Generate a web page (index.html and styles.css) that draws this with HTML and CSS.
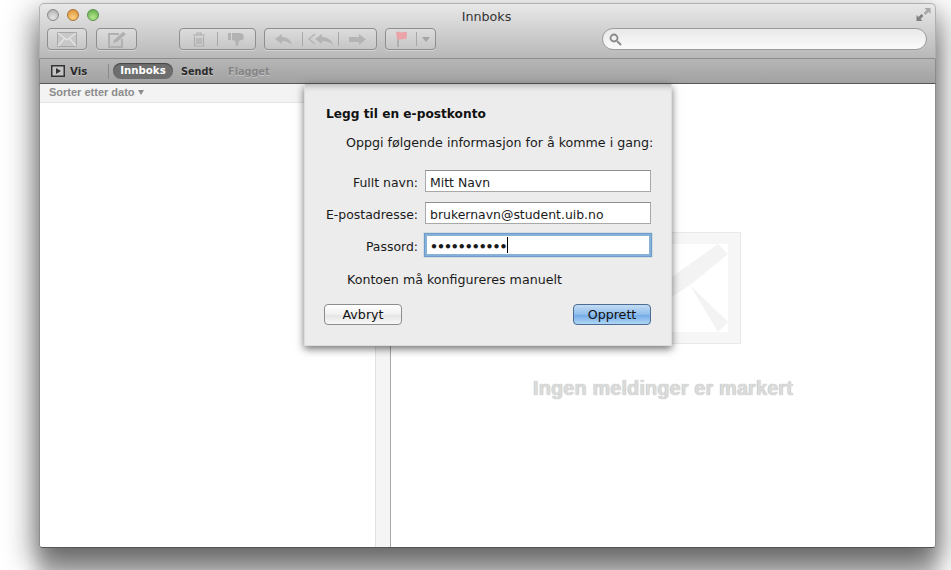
FILE: index.html
```html
<!DOCTYPE html>
<html lang="nb">
<head>
<meta charset="utf-8">
<title>Innboks</title>
<link rel="stylesheet" href="styles.css">
</head>
<body>
<div class="window">
  <header class="titlebar">
    <div class="titlerow">
      <div class="lights"><span class="light gray"></span><span class="light orange"></span><span class="light green"></span></div>
      <div class="title">Innboks</div>
      <svg class="fullscreen" width="15" height="15" viewBox="0 0 15 15"><path d="M8.500 1H14.500V7L12.500 5 9.500 8 7.500 6 10.500 3z" fill="#a9a9a9"/><path d="M6.500 14H.5V8L2.500 10 5.500 7 7.500 9 4.500 12z" fill="#808080"/></svg>
    </div>
    <div class="toolbar">
      <div class="btn w40"><svg width="20" height="15" viewBox="0 0 20 15"><rect x=".5" y=".5" width="19" height="14" fill="#c8c8c8" stroke="#a8a8a8"/><path d="M1 1l9 7 9-7M1 14l6.500-7.500M19 14l-6.500-7.500" fill="none" stroke="#e4e4e4" stroke-width="1.300"/></svg></div>
      <div class="btn w41"><svg width="20" height="17" viewBox="0 0 20 17"><path d="M12 3H2v13h13V8" fill="none" stroke="#b0b0b0" stroke-width="2"/><path d="M6 12l1-3 9-8 3 2-9 8z" fill="#b0b0b0"/></svg></div>
      <div class="btn group g1">
        <span class="seg s1"><svg width="12" height="15" viewBox="0 0 12 15"><path d="M0 3h12M4 3V1h4v2M1.500 4.500V14h9V4.500M4 6v6M6 6v6M8 6v6" fill="none" stroke="#aeaeae" stroke-width="1.200"/></svg></span>
        <span class="seg s2"><svg width="17" height="15" viewBox="0 0 17 15"><path d="M0 1h3v7H0zM4 1h8l3 1 1 5-5 2-1 5H8L7 9 4 8z" fill="#b2b2b2"/></svg></span>
      </div>
      <div class="btn group g2">
        <span class="seg s3"><svg width="20" height="13" viewBox="0 0 20 13"><path d="M8 1L1 6l7 5V8c4 0 7 1 10 4-1-5-5-8-10-8z" fill="#b4b4b4"/></svg></span>
        <span class="seg s4"><svg width="26" height="13" viewBox="0 0 26 13"><path d="M7 1L1 6l6 5" fill="none" stroke="#b4b4b4" stroke-width="1.500"/><path d="M14 1L7 6l7 5V8c4 0 8 1 11 4-1-5-6-8-11-8z" fill="#b4b4b4"/></svg></span>
        <span class="seg s5"><svg width="20" height="13" viewBox="0 0 20 13"><path d="M1 4h10V1l7 5.500-7 5.500V9H1z" fill="#b4b4b4"/></svg></span>
      </div>
      <div class="btn group g3">
        <span class="seg s6"><svg width="13" height="17" viewBox="0 0 13 17"><path d="M3 3v13" stroke="#a8a4a4" stroke-width="1.500"/><path d="M1 1c3-.8 4 .8 6 .4 2-.4 3-.8 5-.4l-.5 7c-2-.5-3 .2-5 .5-2 .2-3-.4-4.500-.2z" fill="#eaa4a8"/></svg></span>
        <span class="seg s7"><span class="caret"></span></span>
      </div>
      <div class="search"><svg width="13" height="13" viewBox="0 0 13 13"><circle cx="5" cy="5" r="3.500" fill="none" stroke="#8a8a8a" stroke-width="1.800"/><path d="M8 8l4 4" stroke="#8a8a8a" stroke-width="2"/></svg></div>
    </div>
  </header>
  <nav class="favbar">
    <div class="vis"><svg width="14" height="12" viewBox="0 0 14 12"><rect x=".75" y=".75" width="12.500" height="10.500" fill="#c4c4c4" stroke="#333" stroke-width="1.500"/><path d="M5 3l5 3-5 3z" fill="#333"/></svg><span>Vis</span></div>
    <span class="favsep"></span>
    <span class="pill">Innboks</span>
    <span class="fav">Sendt</span>
    <span class="fav dim">Flagget</span>
  </nav>
  <main class="content">
    <aside class="list">
      <div class="sort">Sorter etter dato <span class="sortcaret"></span></div>
    </aside>
    <div class="splitter"></div>
    <section class="preview">
      <svg class="bigmail" width="155" height="112" viewBox="0 0 155 112">
        <rect x=".5" y=".5" width="154" height="111" fill="#f6f6f6" stroke="#e9e9e9"/>
        <rect x="13" y="12" width="129" height="88" fill="#fff"/>
        <path d="M132 12L77.500 51 23 12 13 22 51 53 77.500 70 104 53 142 22zM104 53L142 90 132 100zM51 53L13 90 23 100z" fill="#f3f3f3"/>
      </svg>
      <div class="nomsg">Ingen meldinger er markert</div>
    </section>
    <form class="sheet">
      <h2 class="sheet-title">Legg til en e-postkonto</h2>
      <p class="sheet-intro">Oppgi følgende informasjon for å komme i gang:</p>
      <div class="fields">
        <label>Fullt navn:</label><div class="field">Mitt Navn</div>
        <label>E-postadresse:</label><div class="field">brukernavn@student.uib.no</div>
        <label>Passord:</label><div class="field focus"><span class="dots">•••••••••••</span><span class="textcaret"></span></div>
      </div>
      <p class="manual">Kontoen må konfigureres manuelt</p>
      <div class="actions">
        <button type="button" class="push">Avbryt</button>
        <button type="button" class="push primary">Opprett</button>
      </div>
    </form>
  </main>
</div>
</body>
</html>
```

FILE: styles.css
```css
* { box-sizing: border-box; }
html, body { margin: 0; height: 100%; }
body { background: #fff; overflow: hidden; font-family: "DejaVu Sans", sans-serif; color: #1a1a1a; }

.window {
  width: 897px; height: 545px; margin: 3px 0 0 39px;
  display: flex; flex-direction: column;
  border-radius: 5px 5px 3px 3px;
  box-shadow: 0 14px 30px 4px rgba(0,0,0,.55), 0 40px 16px 0 rgba(0,0,0,.15);
  position: relative;
}
.titlebar {
  height: 56px; padding: 0 8px;
  background: linear-gradient(#e8e8e8, #b8b8b8);
  border: 1px solid #b0b0b0; border-bottom: 1px solid #8c8c8c;
  border-radius: 5px 5px 0 0;
}
.titlerow { height: 24px; display: flex; align-items: center; position: relative; justify-content: center; }
.lights { position: absolute; left: -1px; top: 5px; display: flex; gap: 8px; }
.light { width: 12px; height: 12px; border-radius: 50%; border: 1px solid #8a8a8a; }
.gray { background: radial-gradient(circle at 50% 75%, #e6e6e6, #a8a8a8); }
.orange { background: radial-gradient(circle at 50% 75%, #fbd184, #d98a2a); border-color: #a8743a; }
.green { background: radial-gradient(circle at 50% 75%, #b4e88c, #5aa742); border-color: #5f9150; }
.title { font-size: 12.700px; color: #333; margin-left: -2px; }
.fullscreen { position: absolute; right: -4px; top: 3px; }

.toolbar { display: flex; align-items: center; height: 22px; margin-left: -1px; }
.btn {
  height: 22px; display: flex; align-items: center; justify-content: center;
  border: 1px solid #8e8e8e; border-radius: 4px;
  background: linear-gradient(#dcdcdc, #c6c6c6);
  box-shadow: 0 1px 0 rgba(255,255,255,.35);
}
.w40 { width: 40px; margin-right: 9px; }
.w41 { width: 41px; margin-right: 42px; }
.group { justify-content: flex-start; }
.g1 { width: 77px; margin-right: 8px; }
.g2 { width: 113px; margin-right: 8px; }
.g3 { width: 51px; margin-right: 166px; }
.seg { height: 14px; display: flex; align-items: center; justify-content: center; border-right: 1px solid #a8a8a8; }
.seg:last-child { border-right: 0; }
.s1 { width: 38px; } .s2 { width: 37px; }
.s3 { width: 38px; } .s4 { width: 36px; } .s5 { width: 37px; }
.s6 { width: 31px; } .s7 { width: 18px; }
.caret { width: 0; height: 0; border: 4px solid transparent; border-top: 5px solid #a4a4a4; border-bottom: 0; }
.search {
  width: 325px; height: 22px; padding-left: 6px; display: flex; align-items: center;
  border: 1px solid #9c9c9c; border-radius: 11px;
  background: linear-gradient(#e9e9e9, #fafafa);
}

.favbar {
  height: 25px; display: flex; align-items: center; padding-left: 11px;
  background: linear-gradient(#b6b6b6, #a2a2a2);
  border-left: 1px solid #8c8c8c; border-right: 1px solid #8c8c8c; border-bottom: 1px solid #565656;
  font-size: 10.200px; font-weight: bold; color: #2a2a2a;
}
.vis { display: flex; align-items: center; gap: 5px; width: 57px; text-shadow: 0 1px 0 rgba(255,255,255,.35); }
.favsep { width: 1px; height: 15px; background: #8a8a8a; margin-right: 4px; }
.pill { width: 60px; height: 16px; line-height: 15px; text-align: center; border-radius: 8px; background: #6e6e6e; color: #fff; margin-right: 8px; box-shadow: inset 0 1px 1px rgba(0,0,0,.4); }
.fav { font-size: 9.700px; margin-right: 15px; text-shadow: 0 1px 0 rgba(255,255,255,.35); }
.dim { color: #858585; }

.content {
  flex: 1; display: flex; position: relative; background: #fff;
  border-left: 1px solid #8c8c8c; border-right: 1px solid #8c8c8c; border-bottom: 1px solid #555;
  border-radius: 0 0 3px 3px;
}
.list { width: 335px; }
.sort {
  height: 19px; padding-left: 9px;
  background: #f3f3f3; border-bottom: 1px solid #e4e4e4;
  font: bold 11px/17px "Liberation Sans", sans-serif; color: #8c8c8c;
}
.sortcaret { display: inline-block; width: 0; height: 0; border: 3.500px solid transparent; border-top: 5px solid #8c8c8c; border-bottom: 0; vertical-align: 1px; }
.splitter { width: 16px; background: #f5f5f5; border-left: 1px solid #e2e2e2; border-right: 1px solid #a8a8a8; }
.preview { flex: 1; display: flex; flex-direction: column; align-items: center; padding-top: 148px; }
.bigmail { display: block; }
.nomsg {
  margin-top: 33px; font: bold 20px/22px "Liberation Sans", sans-serif; letter-spacing: .08px; color: #dcdcdc;
  text-shadow: 0 0 1px #999;
}

.sheet {
  position: absolute; left: 264px; top: 0; width: 368px; height: 262px; padding: 0 20px 0 19px;
  background: #ececec; border: 1px solid #dcdcdc; border-top: 0;
  box-shadow: 0 3px 8px rgba(0,0,0,.55), inset 0 7px 6px -5px rgba(0,0,0,.25);
  font-size: 12.650px;
}
.sheet-title { margin: 21px 0 0 2px; font-size: 12.200px; line-height: 18px; font-weight: bold; color: #111; }
.sheet-intro { margin: 11px 0 0 22px; line-height: 18px; white-space: nowrap; }
.fields { display: grid; grid-template-columns: 94px 226px; column-gap: 7px; row-gap: 10px; margin-top: 18px; font-size: 12.450px; }
.fields label { text-align: right; white-space: nowrap; height: 22px; line-height: 25px; }
.field { height: 22px; padding: 3px 0 0 4px; background: #fff; border: 1px solid #a8a8a8; border-top-color: #8f8f8f; display: flex; align-items: center; }
.focus { padding-left: 3px; border: 2px solid #86b2da; box-shadow: 0 0 1px 1px #6d9cc8; }
.dots { font-weight: bold; letter-spacing: -1px; }
.textcaret { width: 1px; height: 16px; background: #000; margin: -3px 0 0 1px; }
.manual { margin: 15px 0 0 23px; line-height: 18px; }
.actions { display: flex; justify-content: space-between; margin-top: 15px; }
.push {
  width: 78px; height: 21px; padding: 0; font: inherit; color: #111;
  border: 1px solid #8c8c8c; border-radius: 4px;
  background: linear-gradient(#fff, #f0f0f0 50%, #e4e4e4 51%, #f8f8f8);
}
.primary { background: linear-gradient(#c4dcf4, #8fbdea 50%, #6fa8e6 51%, #b0d6f6); border-color: #4c6c96; }
```
